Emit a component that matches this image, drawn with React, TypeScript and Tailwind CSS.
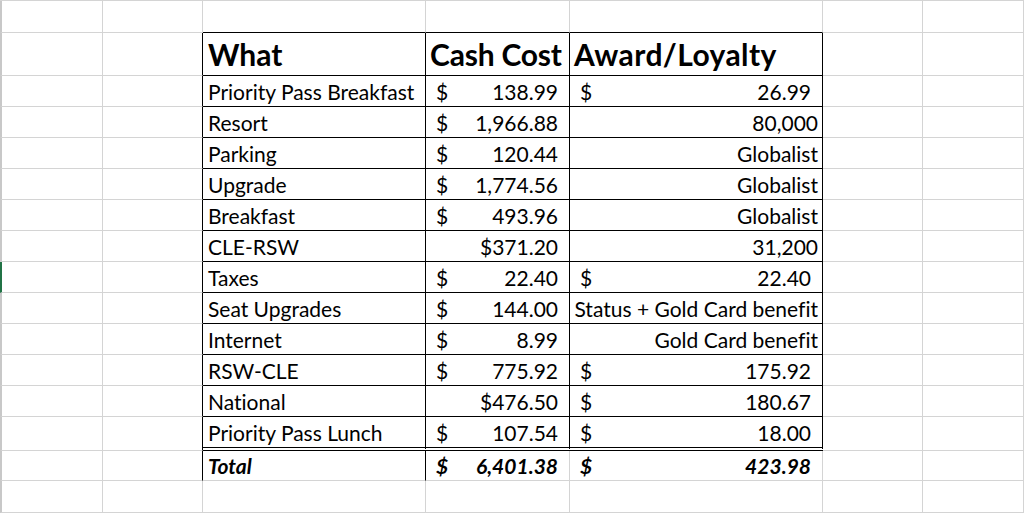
import React from "react";

type Val =
  | { kind: "acct"; v: string }
  | { kind: "cur"; v: string }
  | { kind: "text"; v: string };

const acct = (v: string): Val => ({ kind: "acct", v });
const cur = (v: string): Val => ({ kind: "cur", v });
const text = (v: string): Val => ({ kind: "text", v });

const items: [string, Val, Val][] = [
  ["Priority Pass Breakfast", acct("138.99"), acct("26.99")],
  ["Resort", acct("1,966.88"), text("80,000")],
  ["Parking", acct("120.44"), text("Globalist")],
  ["Upgrade", acct("1,774.56"), text("Globalist")],
  ["Breakfast", acct("493.96"), text("Globalist")],
  ["CLE-RSW", cur("$371.20"), text("31,200")],
  ["Taxes", acct("22.40"), acct("22.40")],
  ["Seat Upgrades", acct("144.00"), text("Status + Gold Card benefit")],
  ["Internet", acct("8.99"), text("Gold Card benefit")],
  ["RSW-CLE", acct("775.92"), acct("175.92")],
  ["National", cur("$476.50"), acct("180.67")],
  ["Priority Pass Lunch", acct("107.54"), acct("18.00")],
];

// row kinds: top, header, data, lunch, total, blank
type RowKind = "top" | "header" | "data" | "lunch" | "total" | "blank";

const rowHeight: Record<RowKind, string> = {
  top: "h-[32px]",
  header: "h-[43px]",
  data: "h-[31px]",
  lunch: "h-[34px]",
  total: "h-[30px]",
  blank: "h-[32px]",
};

const ValueCell = ({ val }: { val: Val }) => {
  if (val.kind === "acct") {
    return (
      <div className="flex w-full justify-between pl-[10px] pr-[11px]">
        <span>$</span>
        <span>{val.v}</span>
      </div>
    );
  }
  if (val.kind === "cur") {
    return <div className="w-full pr-[11px] text-right">{val.v}</div>;
  }
  return <div className="w-full whitespace-nowrap pr-[4px] text-right">{val.v}</div>;
};

// col 0 = gutter, 1..7 = A..G ; table is C..E (3..5)
const cellClass = (kind: RowKind, col: number, selected: boolean) => {
  const inTable = kind === "header" || kind === "data" || kind === "lunch";
  let right = "border-r border-r-[#d4d4d4]";
  let bottom = "border-b border-b-[#d4d4d4]";

  if (col === 0) {
    return selected
      ? "border-l-2 border-l-[#217346] border-b border-b-[#d4d4d4]"
      : "border-l-2 border-l-[#c8c8c8] border-b border-b-[#d4d4d4]";
  }
  if (col === 2 && (inTable || kind === "total")) right = "border-r border-r-black";
  if (col >= 3 && col <= 5) {
    if (kind === "top") bottom = "border-b border-b-black";
    if (inTable) {
      right = "border-r border-r-black";
      bottom = "border-b border-b-black";
    }
    if (kind === "lunch") bottom = "border-b-4 border-double border-b-black";
    if (kind === "total" && col === 3) right = "border-r border-r-black";
  }
  return `${right} ${bottom}`;
};

const Row = ({
  kind,
  cells,
  selected = false,
  font,
}: {
  kind: RowKind;
  cells?: React.ReactNode[];
  selected?: boolean;
  font: string;
}) => (
  <>
    {[0, 1, 2, 3, 4, 5, 6, 7].map((col) => (
      <div
        key={col}
        className={`${rowHeight[kind]} ${cellClass(kind, col, selected)} flex items-end overflow-visible ${font}`}
      >
        {cells && col >= 3 && col <= 5 ? cells[col - 3] : null}
      </div>
    ))}
  </>
);

const App = () => {
  return (
    <div className="h-[513px] w-[1024px] overflow-hidden bg-white text-black [font-family:Lato,'Noto_Sans',sans-serif] [font-variant-ligatures:none]">
      <div className="grid grid-cols-[3px_100px_100px_223px_144px_253px_100px_101px] border-t border-t-[#d4d4d4]">
        <Row kind="top" font="" />
        <Row
          kind="header"
          font="text-[30px] font-bold leading-none pb-[6px] whitespace-nowrap"
          cells={[
            <div className="pl-[5px]">What</div>,
            <div className="pl-[4px] tracking-[-0.2px]">Cash Cost</div>,
            <div className="pl-[4px] tracking-[0.4px]">Award/Loyalty</div>,
          ]}
        />
        {items.map(([what, cash, award], i) => (
          <Row
            key={what}
            kind={i === items.length - 1 ? "lunch" : "data"}
            selected={what === "Taxes"}
            font="text-[21px] leading-none pb-[4px] whitespace-nowrap"
            cells={[
              <div className="pl-[5px]">{what}</div>,
              <ValueCell val={cash} />,
              <ValueCell val={award} />,
            ]}
          />
        ))}
        <Row
          kind="total"
          font="text-[21px] font-bold italic leading-none pb-[4px] whitespace-nowrap"
          cells={[
            <div className="pl-[5px]">Total</div>,
            <ValueCell val={acct("6,401.38")} />,
            <ValueCell val={acct("423.98")} />,
          ]}
        />
        <Row kind="blank" font="" />
      </div>
    </div>
  );
};

export default App;
